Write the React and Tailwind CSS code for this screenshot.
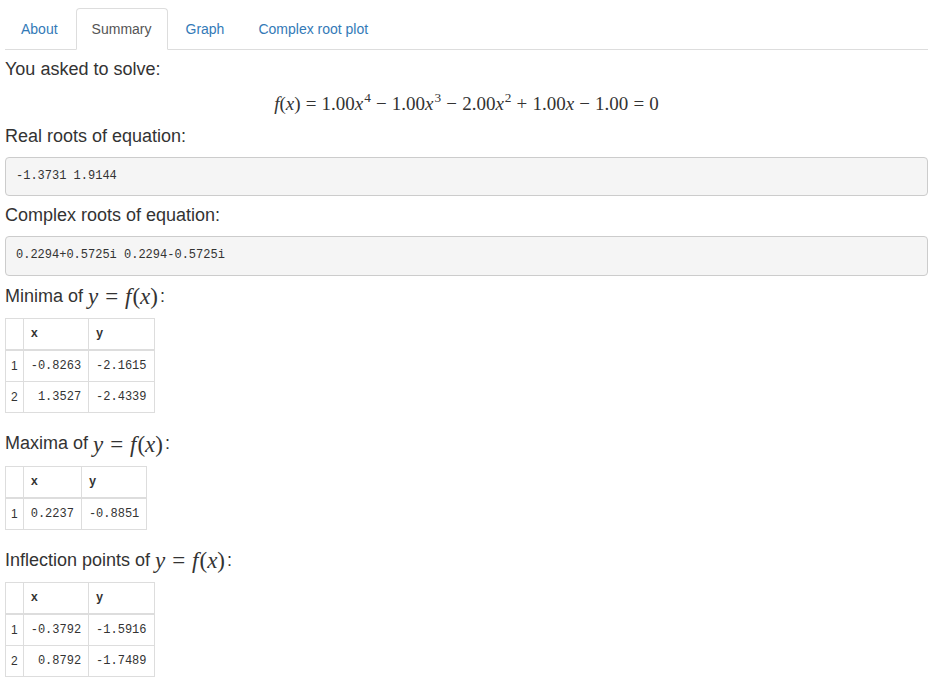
import React from 'react'

const tabs = ['About', 'Summary', 'Graph', 'Complex root plot']

const V = ({ children }) => <i className="italic">{children}</i>
const Op = ({ children }) => <span className="mx-[0.27em]">{children}</span>
const Sup = ({ children }) => (
  <sup className="text-[0.7em] relative -top-[0.55em] ml-[1px]">{children}</sup>
)

// inline y = f(x)
const YF = () => (
  <span className="font-['Liberation_Serif',serif] text-[23px] leading-none">
    <V>y</V>
    <span className="mx-[0.3em]">=</span>
    <V>f</V>
    <span className="ml-[1px]">(</span>
    <V>x</V>)
  </span>
)

const Heading = ({ children, className = '' }) => (
  <h4 className={`text-[18px] leading-[1.1] my-[10px] font-normal ${className}`}>{children}</h4>
)

const Pre = ({ children }) => (
  <pre className="mb-[10px] px-[10px] py-[9.5px] text-[12px] leading-[18.57px] font-['Liberation_Mono',monospace] text-[#333] bg-[#f5f5f5] border border-[#ccc] rounded-[4px]">
    {children}
  </pre>
)

const DataTable = ({ rows }) => (
  <table className="mb-[20px] border-collapse font-['Liberation_Mono',monospace] text-[12px] leading-[20px]">
    <thead>
      <tr>
        <th className="border border-[#ddd] border-b-2 px-[5px] py-[5px]"></th>
        <th className="border border-[#ddd] border-b-2 px-[7px] py-[5px] text-left font-bold">x</th>
        <th className="border border-[#ddd] border-b-2 px-[7px] py-[5px] text-left font-bold">y</th>
      </tr>
    </thead>
    <tbody>
      {rows.map((r, i) => (
        <tr key={i}>
          <td className="border border-[#ddd] px-[5px] py-[5px] font-['Liberation_Sans',sans-serif]">{i + 1}</td>
          <td className="border border-[#ddd] px-[7px] py-[5px] text-right">{r[0]}</td>
          <td className="border border-[#ddd] px-[7px] py-[5px] text-right">{r[1]}</td>
        </tr>
      ))}
    </tbody>
  </table>
)

export default function App() {
  return (
    <div className="px-[5px] pt-[8px] font-['Liberation_Sans',Arial,sans-serif] text-[14px] text-[#333] bg-white min-h-screen">
      {/* Tabs */}
      <ul className="flex border-b border-[#ddd]">
        {tabs.map(t => {
          const active = t === 'Summary'
          return (
            <li key={t} className="-mb-px mr-[2px]">
              <span
                className={
                  active
                    ? 'block px-[15px] py-[10px] leading-[20px] border border-[#ddd] border-b-white bg-white rounded-t-[4px] text-[#555]'
                    : 'block px-[15px] py-[10px] leading-[20px] border border-transparent rounded-t-[4px] text-[#337ab7]'
                }
              >
                {t}
              </span>
            </li>
          )
        })}
      </ul>

      <Heading>You asked to solve:</Heading>
      <div className="h-[27px] flex items-center justify-center font-['Liberation_Serif',serif] text-[19px] leading-none">
        <span>
          <V>f</V>(<V>x</V>)<Op>=</Op>1.00<V>x</V><Sup>4</Sup>
          <Op>−</Op>1.00<V>x</V><Sup>3</Sup>
          <Op>−</Op>2.00<V>x</V><Sup>2</Sup>
          <Op>+</Op>1.00<V>x</V>
          <Op>−</Op>1.00<Op>=</Op>0
        </span>
      </div>

      <Heading>Real roots of equation:</Heading>
      <Pre>-1.3731 1.9144</Pre>

      <Heading>Complex roots of equation:</Heading>
      <Pre>0.2294+0.5725i 0.2294-0.5725i</Pre>

      <Heading className="h-[22px] flex items-center">
        <span>Minima of&nbsp;</span>
        <YF />
        <span className="ml-[2px]">:</span>
      </Heading>
      <DataTable rows={[['-0.8263', '-2.1615'], ['1.3527', '-2.4339']]} />

      <Heading className="h-[23px] flex items-center">
        <span>Maxima of&nbsp;</span>
        <YF />
        <span className="ml-[2px]">:</span>
      </Heading>
      <DataTable rows={[['0.2237', '-0.8851']]} />

      <Heading className="h-[22px] flex items-center">
        <span>Inflection points of&nbsp;</span>
        <YF />
        <span className="ml-[2px]">:</span>
      </Heading>
      <DataTable rows={[['-0.3792', '-1.5916'], ['0.8792', '-1.7489']]} />
    </div>
  )
}
